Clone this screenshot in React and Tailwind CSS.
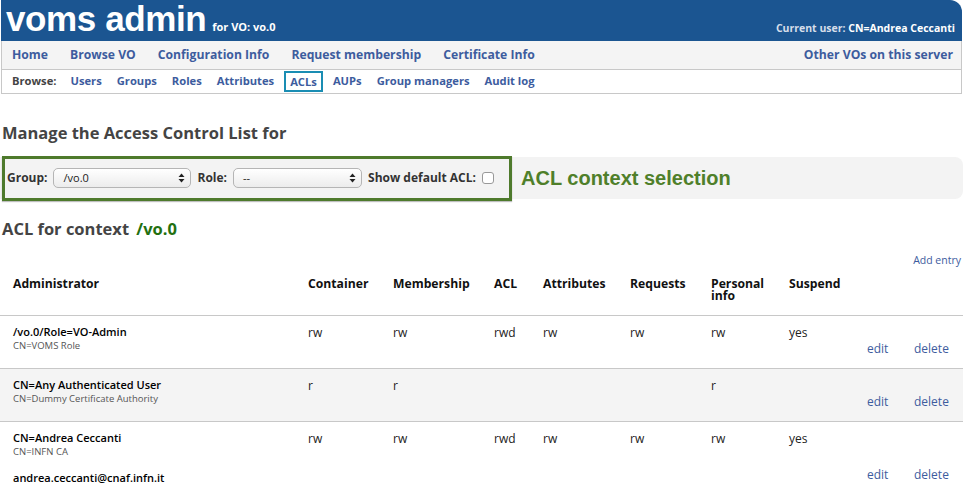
import React from 'react';

const link = 'text-[#3d5c9e]';

function SelectBox({ value, width }) {
  return (
    <div
      className={`flex h-[20px] items-center justify-between rounded-[5px] border border-[#b5b5b5] bg-gradient-to-b from-white to-[#ececec] pl-[9px] pr-[5px] text-[11px] font-normal text-[#222] ${width}`}
    >
      <span>{value}</span>
      <svg width="7" height="10" viewBox="0 0 7 10">
        <path d="M3.5 0.5 L6.5 4 H0.5 Z" fill="#222" />
        <path d="M3.5 9.5 L6.5 6 H0.5 Z" fill="#222" />
      </svg>
    </div>
  );
}

const rows = [
  {
    name: '/vo.0/Role=VO-Admin',
    ca: 'CN=VOMS Role',
    vals: ['rw', 'rw', 'rwd', 'rw', 'rw', 'rw', 'yes'],
    h: 'h-[53px]',
    bg: 'bg-white',
  },
  {
    name: 'CN=Any Authenticated User',
    ca: 'CN=Dummy Certificate Authority',
    vals: ['r', 'r', '', '', '', 'r', ''],
    h: 'h-[53px]',
    bg: 'bg-[#f4f4f4]',
  },
  {
    name: 'CN=Andrea Ceccanti',
    ca: 'CN=INFN CA',
    email: 'andrea.ceccanti@cnaf.infn.it',
    vals: ['rw', 'rw', 'rwd', 'rw', 'rw', 'rw', 'yes'],
    h: 'h-[73px]',
    bg: 'bg-white',
  },
];

const cols = ['w-[85px]', 'w-[101px]', 'w-[49px]', 'w-[87px]', 'w-[81px]', 'w-[78px]', 'w-[78px]'];

export default function App() {
  return (
    <div className="h-[494px] w-[963px] overflow-hidden bg-white font-['Open_Sans',sans-serif]">
      {/* top banner */}
      <div className="mx-[1px] flex h-[41px] items-end justify-between rounded-tr-[12px] bg-[#1b5591] px-[5px] pb-[6px]">
        <div className="flex items-baseline">
          <span className="font-['Liberation_Sans',sans-serif] text-[35px] font-bold leading-[30px] tracking-[-0.4px] text-white">
            voms admin
          </span>
          <span className="ml-[6px] text-[11px] font-bold text-white">for VO: vo.0</span>
        </div>
        <div className="pr-[2px] text-[10.5px] font-bold leading-[14px]">
          <span className="text-[#d6deea]">Current user: </span>
          <span className="text-white">CN=Andrea Ceccanti</span>
        </div>
      </div>

      {/* main nav */}
      <div className="mx-[1px] flex h-[29px] items-center justify-between border-x border-b border-[#c8c8c8] bg-[#f4f4f4] pl-[10px] pr-[8px] text-[12.2px] font-bold">
        <div className="flex gap-[22px]">
          {['Home', 'Browse VO', 'Configuration Info', 'Request membership', 'Certificate Info'].map((t) => (
            <span key={t} className={link}>{t}</span>
          ))}
        </div>
        <span className={link}>Other VOs on this server</span>
      </div>

      {/* sub nav */}
      <div className="mx-[1px] flex h-[24px] items-center border-x border-b border-[#c8c8c8] px-[10px] text-[11.2px] font-bold">
        <span className="mr-[14px] text-[#444]">Browse:</span>
        <div className="flex items-center gap-[15px]">
          {['Users', 'Groups', 'Roles', 'Attributes'].map((t) => (
            <span key={t} className={link}>{t}</span>
          ))}
          <span className={`${link} -mx-[5px] border-2 border-[#1a8db3] px-[4px] leading-[17px]`}>ACLs</span>
          {['AUPs', 'Group managers', 'Audit log'].map((t) => (
            <span key={t} className={link}>{t}</span>
          ))}
        </div>
      </div>

      {/* manage heading */}
      <h2 className="mt-[29px] pl-[2px] text-[16.5px] font-bold leading-[20px] text-[#444]">
        Manage the Access Control List for
      </h2>

      {/* context selection bar */}
      <div className="mt-[14px] flex h-[42px] items-center rounded-r-[8px] bg-[#f3f3f3]">
        <div className="ml-[2px] flex h-[45px] w-[510px] items-center gap-[6px] border-[3px] border-[#4e7a2c] px-[2px] text-[12px] font-bold text-[#333] shadow-[0_1px_1px_rgba(0,0,0,0.25)]">
          <span>Group:</span>
          <SelectBox value="/vo.0" width="w-[138px]" />
          <span>Role:</span>
          <SelectBox value="--" width="w-[129px]" />
          <span>Show default ACL:</span>
          <span className="h-[12px] w-[12px] rounded-[3px] border border-[#999] bg-white" />
        </div>
        <span className="ml-[9px] font-['Liberation_Sans',sans-serif] text-[20px] font-bold text-[#4f7f2a]">
          ACL context selection
        </span>
      </div>

      {/* ACL for context */}
      <h2 className="mt-[20px] pl-[2px] text-[16.5px] font-bold leading-[20px] text-[#444]">
        ACL for context <span className="ml-[3px] text-[#23700f]">/vo.0</span>
      </h2>

      <div className="mt-[15px] flex justify-end pr-[2px] text-[10.5px] leading-[12px]">
        <span className={link}>Add entry</span>
      </div>

      {/* ACL table */}
      <table className="mt-[4px] w-[963px] table-fixed border-collapse text-[12px] text-[#111]">
        <thead>
          <tr className="h-[45px] border-b border-[#c8c8c8] align-top text-[12.2px] font-bold leading-[12px]">
            <th className="w-[300px] pl-[13px] pt-[8px] text-left">Administrator</th>
            {['Container', 'Membership', 'ACL', 'Attributes', 'Requests'].map((t, i) => (
              <th key={t} className={`${cols[i]} pl-[8px] pt-[8px] text-left`}>{t}</th>
            ))}
            <th className={`${cols[5]} pl-[8px] pt-[8px] text-left`}>
              Personal
              <br />
              info
            </th>
            <th className={`${cols[6]} pl-[8px] pt-[8px] text-left`}>Suspend</th>
            <th className="w-[47px]" />
            <th />
          </tr>
        </thead>
        <tbody>
          {rows.map((r) => (
            <tr key={r.name} className={`${r.h} ${r.bg} border-b border-[#c8c8c8]`}>
              <td className="pl-[13px] pt-[9px] align-top">
                <div className="text-[11px] font-semibold leading-[14px] text-black">{r.name}</div>
                <div className="text-[9.5px] leading-[13px] text-[#555]">{r.ca}</div>
                {r.email && (
                  <div className="mt-[13px] text-[11px] font-semibold leading-[14px] text-black">{r.email}</div>
                )}
              </td>
              {r.vals.map((v, i) => (
                <td key={i} className="pl-[8px] pt-[10px] align-top text-[12px] leading-[14px] text-[#222]">{v}</td>
              ))}
              <td className={`${link} pb-[12px] pl-[8px] align-bottom text-[12px] leading-[14px]`}>edit</td>
              <td className={`${link} pb-[12px] pl-[8px] align-bottom text-[12px] leading-[14px]`}>delete</td>
            </tr>
          ))}
        </tbody>
      </table>
    </div>
  );
}
